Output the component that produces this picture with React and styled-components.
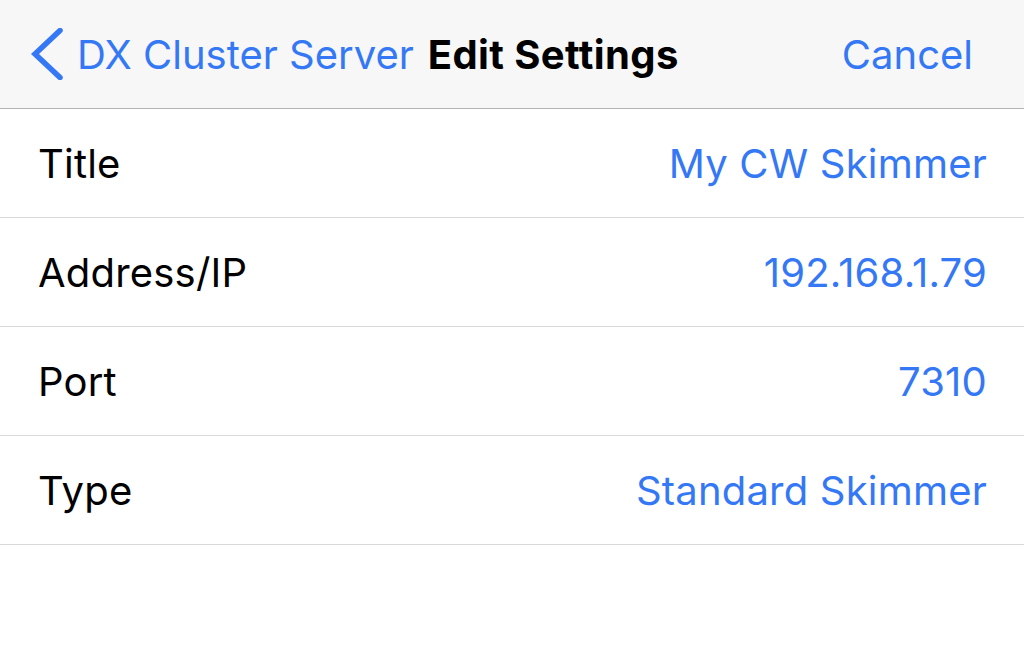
import React from 'react';
import styled, { createGlobalStyle } from 'styled-components';

const Global = createGlobalStyle`
  body {
    margin: 0;
    background: #ffffff;
    font-family: 'Inter', 'Roboto', sans-serif;
    -webkit-font-smoothing: antialiased;
  }
`;

const Screen = styled.div`
  width: 1024px;
  height: 646px;
  background: #ffffff;
  overflow: hidden;
`;

const NavBar = styled.header`
  display: flex;
  align-items: center;
  height: 108px;
  background: #f7f7f7;
  border-bottom: 1px solid #b3b3b3;
  padding: 0 51px 0 30px;
  white-space: nowrap;
`;

const Back = styled.div`
  display: flex;
  align-items: center;
  gap: 14px;
  color: #3478f6;
  font-size: 40px;
`;

const NavTitle = styled.div`
  margin-left: 14px;
  font-size: 40px;
  font-weight: 700;
  color: #000;
  letter-spacing: 0.4px;
`;

const Cancel = styled.div`
  margin-left: auto;
  color: #3478f6;
  font-size: 40px;
`;

const Row = styled.div`
  display: flex;
  align-items: center;
  justify-content: space-between;
  height: 108px;
  padding: 0 37px 0 38px;
  border-bottom: 1px solid #d9d9d9;
  font-size: 40px;
  letter-spacing: 0.2px;
`;

const Label = styled.span`
  color: #000;
`;

const Value = styled.span`
  color: #3478f6;
`;

const rows = [
  { label: 'Title', value: 'My CW Skimmer' },
  { label: 'Address/IP', value: '192.168.1.79' },
  { label: 'Port', value: '7310' },
  { label: 'Type', value: 'Standard Skimmer' },
];

const App = () => (
  <Screen>
    <Global />
    <NavBar>
      <Back>
        <svg width="33" height="52" viewBox="0 0 33 52">
          <path d="M30 2.5 L5 26 L30 49.5" fill="none" stroke="#3478f6" strokeWidth="5.5" strokeLinecap="round" strokeLinejoin="miter" />
        </svg>
        <span>DX Cluster Server</span>
      </Back>
      <NavTitle>Edit Settings</NavTitle>
      <Cancel>Cancel</Cancel>
    </NavBar>
    {rows.map((row) => (
      <Row key={row.label}>
        <Label>{row.label}</Label>
        <Value>{row.value}</Value>
      </Row>
    ))}
  </Screen>
);

export default App;
